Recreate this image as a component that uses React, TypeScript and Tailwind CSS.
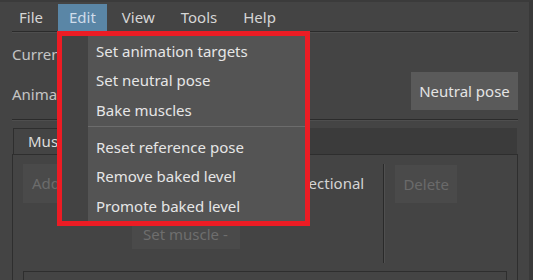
import React from "react";

const font = { fontFamily: '"Noto Sans", "Open Sans", sans-serif' };

export default function App() {
  const menuItems1 = ["Set animation targets", "Set neutral pose", "Bake muscles"];
  const menuItems2 = ["Reset reference pose", "Remove baked level", "Promote baked level"];
  return (
    <div
      className="relative w-[533px] h-[280px] overflow-hidden bg-[#444444] border-t-2 border-[#3b3b3b] border-r-4 border-r-[#393939] text-[15px] flex flex-col"
      style={font}
    >
      {/* menubar */}
      <div className="h-[32px] flex items-start pt-[2px] pl-[8px] gap-[4px] text-[#d6d6d6]">
        <div className="h-[27px] px-[11px] flex items-center">File</div>
        <div className="h-[27px] px-[11px] flex items-center bg-[#5a86a6] text-[#cfdcea]">Edit</div>
        <div className="h-[27px] px-[11px] flex items-center">View</div>
        <div className="h-[27px] px-[11px] flex items-center">Tools</div>
        <div className="h-[27px] px-[11px] flex items-center">Help</div>
      </div>

      <div className="flex flex-col pl-[12px] pr-[11px] flex-1">
        <div className="h-[2px] border-t border-[#2b2b2b] border-b border-b-[#4e4e4e]" />
        <div className="h-[38px] flex items-center text-[#c4c4c4] pt-[4px]">Current muscle</div>
        <div className="h-[40px] flex items-center justify-between text-[#c4c4c4]">
          <span className="pt-[6px]">Animation targets</span>
          <div className="h-[38px] w-[107px] bg-[#5a5a5a] text-[#e4e4e4] flex items-center justify-center">
            Neutral pose
          </div>
        </div>
        <div className="mt-[8px] h-[2px] border-t border-[#2b2b2b] border-b border-b-[#4e4e4e]" />

        {/* tabs */}
        <div className="mt-[7px] flex flex-col flex-1">
          <div className="h-[26px] flex bg-[#3b3b3b] ml-[1px] mr-[1px]">
            <div className="w-[130px] h-[26px] bg-[#444444] border border-[#2e2e2e] border-b-0 text-[#dcdcdc] pl-[14px] flex items-center">
              Muscles
            </div>
          </div>
          <div className="flex-1 border-l border-t border-r border-[#2e2e2e] pl-[10px] pr-[10px] pt-[9px] flex flex-col">
            <div className="flex items-start h-[99px]">
              <div className="h-[39px] w-[120px] bg-[#4a4a4a] text-[#6c6c6c] flex items-center pl-[9px]">
                Add muscle
              </div>
              <div className="ml-[133px] h-[39px] flex items-center text-[#d4d4d4]">Bidirectional</div>
              <div className="ml-[19px] w-[2px] h-[99px] border-l border-[#2a2a2a] border-r border-r-[#505050]" />
              <div className="ml-[10px] mt-[1px] h-[38px] w-[62px] bg-[#4a4a4a] text-[#6a6a6a] flex items-center justify-center">
                Delete
              </div>
            </div>
            <div className="-mt-[43px] ml-[109px] h-[29px] w-[108px] bg-[#4a4a4a] text-[#6e6e6e] flex items-center pl-[11px]">
              Set muscle -
            </div>
            <div className="mt-[22px] h-[10px] border-t border-l border-r border-[#2e2e2e]" />
          </div>
        </div>
      </div>

      {/* dropdown menu with annotation */}
      <div className="absolute left-[57px] top-[29px] w-[253px] h-[195px] border-[5px] border-[#ec1c24] overflow-hidden">
        <div className="flex h-full bg-[#545454]">
          <div className="w-[26px] bg-[#434343]" />
          <div className="flex-1 flex flex-col text-[#e6e6e6]">
            {menuItems1.map((t) => (
              <div key={t} className="h-[30px] flex items-center pl-[8px]">{t}</div>
            ))}
            <div className="h-[7px] pt-[1px]">
              <div className="h-px bg-[#6c6c6c]" />
            </div>
            {menuItems2.map((t) => (
              <div key={t} className="h-[30px] flex items-center pl-[8px]">{t}</div>
            ))}
          </div>
        </div>
      </div>
    </div>
  );
}
